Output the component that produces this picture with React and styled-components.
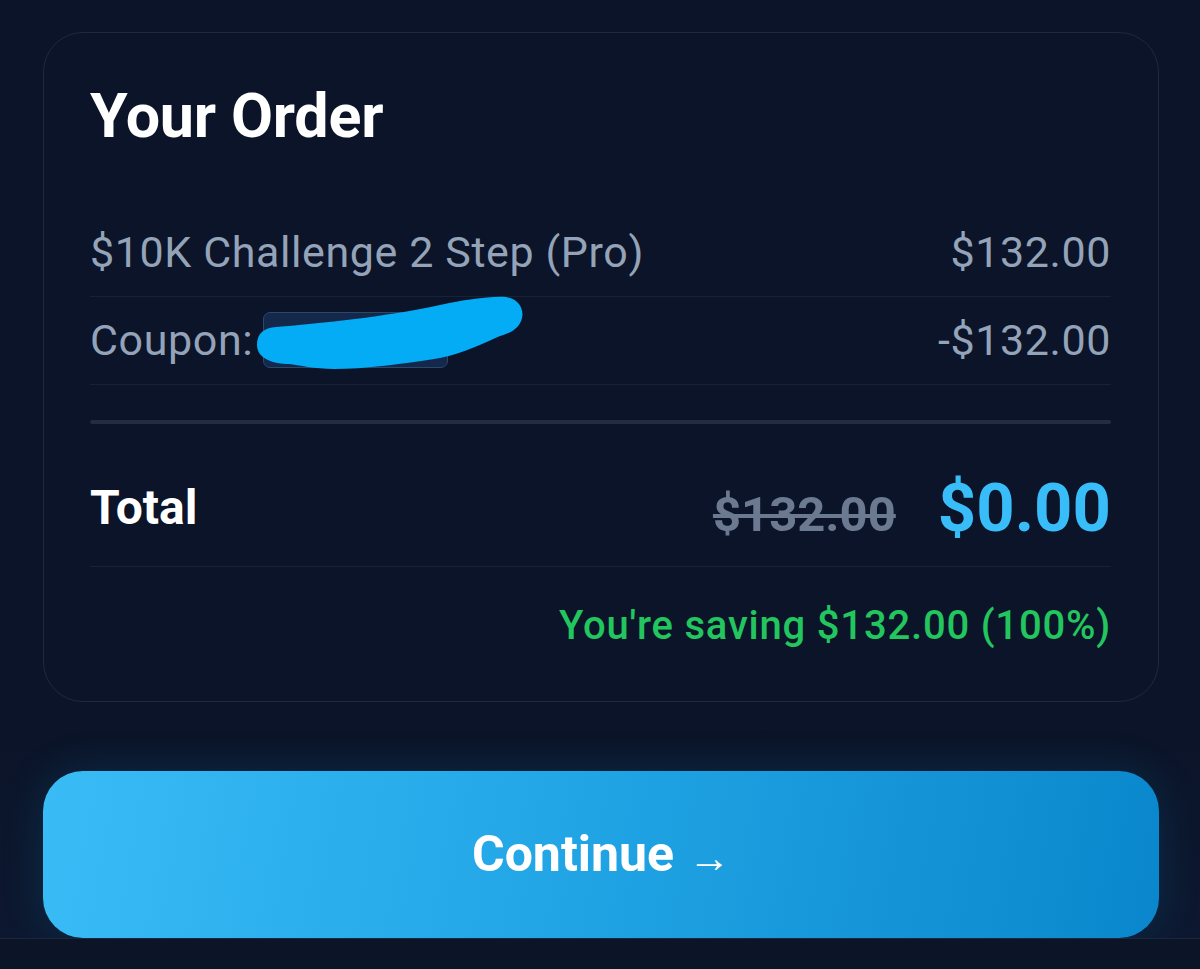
import React from "react";
import styled, { createGlobalStyle } from "styled-components";

const GlobalStyle = createGlobalStyle`
  html, body {
    margin: 0;
    padding: 0;
    background: #0b1428;
  }
  body {
    font-family: Roboto, "Noto Sans", "Liberation Sans", sans-serif;
    -webkit-font-smoothing: antialiased;
  }
`;

const Page = styled.div`
  min-height: 969px;
  display: flex;
  flex-direction: column;
  background: #0b1428;
`;

const Content = styled.main`
  padding: 32px 41px 0 43px;
`;

const Card = styled.section`
  border: 1.5px solid #1f2a3d;
  border-radius: 40px;
  padding: 47px 47px 51px 46px;
  background: #0b1428;
`;

const Title = styled.h1`
  margin: 0 0 57px;
  font-size: 61px;
  line-height: 72px;
  font-weight: 700;
  color: #ffffff;
  letter-spacing: -0.2px;
`;

const LineItem = styled.div`
  display: flex;
  align-items: center;
  justify-content: space-between;
  padding: 14px 0;
  border-bottom: 1px solid #172236;
  font-size: 43px;
  line-height: 58.8px;
  letter-spacing: 0.6px;
  color: #94a3b8;
`;

const Label = styled.span`
  display: flex;
  align-items: center;
`;

const CouponTag = styled.span`
  position: relative;
  display: inline-block;
  width: 185px;
  height: 56px;
  margin-left: 10px;
  box-sizing: border-box;
  border: 1.5px solid #2b4867;
  border-radius: 7px;
  background: #13284a;
`;

const Scribble = styled.svg`
  position: absolute;
  left: -30px;
  top: -30px;
  width: 300px;
  height: 110px;
  overflow: visible;
`;

const Separator = styled.hr`
  margin: 35px 0 0;
  border: 0;
  height: 4px;
  border-radius: 2px;
  background: #222d3f;
`;

const TotalRow = styled.div`
  display: flex;
  align-items: center;
  justify-content: space-between;
  padding: 45px 0 18px;
  border-bottom: 1px solid #172236;
`;

const TotalLabel = styled.span`
  font-size: 48px;
  line-height: 58px;
  font-weight: 700;
  color: #ffffff;
`;

const Prices = styled.div`
  display: flex;
  align-items: baseline;
  gap: 42px;
`;

const OldPrice = styled.span`
  font-size: 49px;
  font-weight: 700;
  color: #6b7a90;
  text-decoration: line-through;
  text-decoration-thickness: 4px;
`;

const NewPrice = styled.span`
  font-size: 67px;
  line-height: 79px;
  font-weight: 700;
  color: #38bdf8;
`;

const Savings = styled.p`
  margin: 34px 0 0;
  text-align: right;
  font-size: 40px;
  line-height: 49px;
  font-weight: 500;
  letter-spacing: 0.8px;
  color: #22c55e;
`;

const Footer = styled.div`
  margin-top: 28px;
  padding: 41px 41px 0 43px;
  background: linear-gradient(180deg, rgba(11, 20, 40, 0) 0%, #0d1830 100%);
`;

const ContinueButton = styled.button`
  width: 100%;
  height: 167px;
  border: 0;
  border-radius: 40px;
  display: flex;
  align-items: center;
  justify-content: center;
  gap: 14px;
  background: linear-gradient(100deg, #39bcf6 0%, #22a6e6 45%, #0a87cc 100%);
  box-shadow: 0 0 44px rgba(14, 165, 233, 0.16);
  color: #ffffff;
  font-family: Roboto, "Noto Sans", sans-serif;
  font-size: 50px;
  font-weight: 700;
  cursor: pointer;
`;

const Arrow = styled.span`
  font-size: 42px;
  font-weight: 700;
  transform: translateY(3px);
`;

const BottomBar = styled.div`
  flex: 1;
  border-top: 1.5px solid #1c2739;
  background: #0c1427;
`;

export default function App() {
  return (
    <>
      <GlobalStyle />
      <Page>
        <Content>
          <Card>
            <Title>Your Order</Title>
            <LineItem>
              <span>$10K Challenge 2 Step (Pro)</span>
              <span>$132.00</span>
            </LineItem>
            <LineItem>
              <Label>
                Coupon:
                <CouponTag>
                  <Scribble viewBox="-30 -30 300 110" aria-hidden="true">
                    <path
                      d="M -7 32 C -7 20, 0 15, 12 14 C 60 10, 120 4, 176 -8 C 200 -13, 225 -17, 242 -16 C 256 -14, 260 -2, 258 5 C 256 14, 248 20, 236 23 C 220 30, 200 40, 176 45 C 140 51, 100 56, 70 56 C 50 56, 35 52, 25 51 C 10 51, -7 46, -7 32 Z"
                      fill="#03acf5"
                    />
                  </Scribble>
                </CouponTag>
              </Label>
              <span>-$132.00</span>
            </LineItem>
            <Separator />
            <TotalRow>
              <TotalLabel>Total</TotalLabel>
              <Prices>
                <OldPrice>$132.00</OldPrice>
                <NewPrice>$0.00</NewPrice>
              </Prices>
            </TotalRow>
            <Savings>You're saving $132.00 (100%)</Savings>
          </Card>
        </Content>
        <Footer>
          <ContinueButton>
            Continue <Arrow>→</Arrow>
          </ContinueButton>
        </Footer>
        <BottomBar />
      </Page>
    </>
  );
}
